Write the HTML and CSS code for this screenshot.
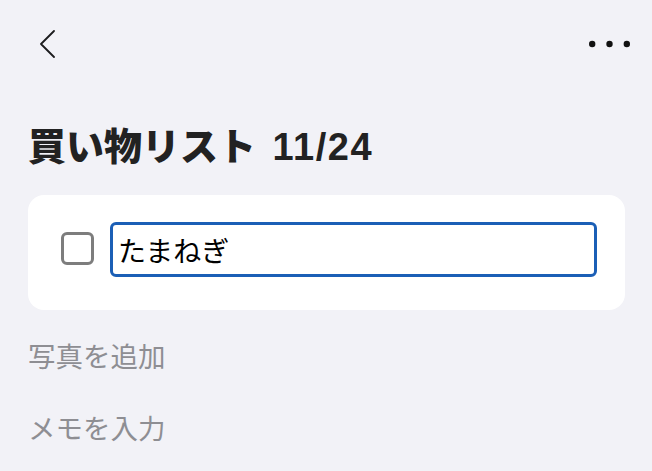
FILE: index.html
```
<!DOCTYPE html>
<html lang="ja">
<head>
	<meta charset="UTF-8"/>
	<title>買い物リスト</title>
	<meta name="viewport" content="width=device-width, initial-scale=1.0"/>
	<link rel="stylesheet" href="styles.css">
</head>
<body>
	<nav class="topbar">
		<a href="#" class="back" title="戻る">
			<svg width="16" height="28" viewBox="0 0 16 28">
				<polyline points="15,1 2,14 15,27" fill="none" stroke="#1c1c1e" stroke-width="1.8" stroke-linecap="round" stroke-linejoin="round"/>
			</svg>
		</a>
		<a href="#" class="more" title="その他">
			<svg width="41" height="8" viewBox="0 0 41 8">
				<circle cx="3.2" cy="4" r="3.2" fill="#111"/>
				<circle cx="20.5" cy="4" r="3.2" fill="#111"/>
				<circle cx="37.8" cy="4" r="3.2" fill="#111"/>
			</svg>
		</a>
	</nav>

	<main class="page">
		<h1 class="title">買い物リスト <span class="count">11/24</span></h1>

		<div class="card">
			<span class="check"></span>
			<input type="text" class="item" value="たまねぎ"/>
		</div>

		<div class="extra">写真を追加</div>
		<div class="extra memo">メモを入力</div>
	</main>
</body>
</html>
```

FILE: styles.css
```
* {
	margin: 0;
	padding: 0;
	box-sizing: border-box;
}

body {
	background-color: #f2f2f7;
	color: #222;
	font-family: "Liberation Sans", "Noto Sans CJK JP", sans-serif;
}

.topbar {
	display: flex;
	justify-content: space-between;
	align-items: center;
	height: 88px;
	padding: 0 22px 0 39px;
}
.topbar a {
	display: flex;
	align-items: center;
}

.page {
	padding: 0 27px 0 28px;
}

.title {
	margin-top: 40px;
	font-size: 38px;
	line-height: 38px;
	font-weight: 900;
	color: #222;
	word-spacing: 6px;
}
.title .count {
	font-weight: bold;
	letter-spacing: 1.5px;
}

.card {
	display: flex;
	align-items: center;
	margin-top: 29px;
	height: 115px;
	padding: 0 28px 6px 33px;
	background-color: #fff;
	border-radius: 16px;
}

.check {
	flex: none;
	width: 33px;
	height: 33px;
	margin: -3px 16px 0 0;
	border: 3px solid #7d7d7d;
	border-radius: 6px;
}

.item {
	flex: 1;
	height: 55px;
	padding: 0 5px;
	font-family: inherit;
	font-size: 28px;
	color: #000;
	background-color: #fff;
	border: 3px solid #1b5fb6;
	border-radius: 6px;
	outline: none;
}

.extra {
	margin-top: 34px;
	font-size: 27.5px;
	line-height: 27px;
	color: #8e8e93;
}
.extra.memo {
	margin-top: 45px;
}
```
